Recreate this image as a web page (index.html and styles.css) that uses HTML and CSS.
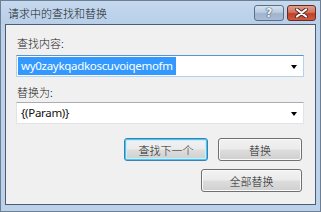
FILE: index.html
```html
<!DOCTYPE html>
<html lang="zh-CN">
<head>
<meta charset="utf-8">
<link rel="stylesheet" href="styles.css">
</head>
<body>
<div class="window">
  <div class="titlebar">
    <span class="title">请求中的查找和替换</span>
    <div class="caption-btns">
      <div class="cap help"><span class="qmark">?</span></div>
      <div class="cap close">
        <svg width="15" height="10" viewBox="0 0 15 10">
          <path d="M3 1.5 L12 8.5 M12 1.5 L3 8.5" stroke="#5a2a22" stroke-width="4" stroke-linecap="round" fill="none"/>
          <path d="M3 1.5 L12 8.5 M12 1.5 L3 8.5" stroke="#ffffff" stroke-width="2.2" stroke-linecap="round" fill="none"/>
        </svg>
      </div>
    </div>
  </div>
  <div class="client">
    <div class="label">查找内容:</div>
    <div class="combo focused">
      <span class="sel">wy0zaykqadkoscuvoiqemofm</span>
      <span class="arrow"></span>
    </div>
    <div class="label label2">替换为:</div>
    <div class="combo">
      <span class="val">{(Param)}</span>
      <span class="arrow"></span>
    </div>
    <div class="btn-row row1">
      <div class="btn default">查找下一个</div>
      <div class="btn">替换</div>
    </div>
    <div class="btn-row row2">
      <div class="btn wide">全部替换</div>
    </div>
  </div>
</div>
</body>
</html>
```
FILE: styles.css
```css
html, body {
  margin: 0;
  padding: 0;
  background: #ffffff;
}
.window {
  width: 321px;
  height: 212px;
  box-sizing: border-box;
  border: 1px solid #6e7f93;
  background: #bcd2eb;
  padding: 0 4px 6px 4px;
  display: flex;
  flex-direction: column;
  font-family: "Noto Sans", "Noto Sans CJK SC", sans-serif;
  color: #1a1a1a;
}
.titlebar {
  height: 23px;
  display: flex;
  align-items: flex-start;
  justify-content: space-between;
  background: linear-gradient(#c4d8ee, #b8cfe9);
  margin: 0 -4px;
  padding: 0 4px 0 7px;
}
.title {
  font-family: "Noto Sans CJK SC", sans-serif;
  font-weight: 300;
  font-size: 11px;
  line-height: 15px;
  margin-top: 5px;
  color: #1b1b1b;
}
.caption-btns {
  display: flex;
  gap: 3px;
  margin-top: 4px;
}
.cap {
  height: 16px;
  box-sizing: border-box;
  border: 1px solid #5b6f87;
  border-radius: 3px;
  display: flex;
  align-items: center;
  justify-content: center;
}
.help {
  width: 30px;
  background: linear-gradient(#d5e2f0 0%, #b9cbe0 45%, #9fb4cd 55%, #a9bdd5 100%);
}
.qmark {
  font-family: "DejaVu Sans", sans-serif;
  font-weight: bold;
  font-size: 12px;
  line-height: 12px;
  color: #eef3f9;
  text-shadow: 0 0 1px #3d4f66, 0 0 1px #3d4f66, 0 0 1px #3d4f66;
}
.close {
  width: 29px;
  border-color: #6b2a1f;
  background: linear-gradient(#e0a08f 0%, #d3735e 45%, #c0402a 55%, #cf5a3f 100%);
}
.close svg {
  display: block;
}
.client {
  flex: 1;
  border: 1px solid #4c5d72;
  background: #f0f0f0;
  padding: 11px 11px 0 10px;
  display: flex;
  flex-direction: column;
  align-items: flex-start;
}
.label {
  font-family: "Noto Sans CJK SC", sans-serif;
  font-weight: 300;
  font-size: 11px;
  line-height: 15px;
  height: 15px;
  margin-bottom: 4px;
  margin-left: 1px;
  color: #1a1a1a;
}
.label2 {
  margin-top: 8px;
  margin-bottom: 2px;
}
.combo {
  width: 288px;
  height: 22px;
  box-sizing: border-box;
  background: #ffffff;
  border: 1px solid #e2e3ea;
  border-top-color: #abadb3;
  display: flex;
  align-items: center;
  padding: 0 6px 0 1px;
}
.combo.focused {
  border-color: #b5d2ec;
  border-top-color: #5c93c8;
}
.sel {
  background: #3399ff;
  color: #ffffff;
  font-size: 11.5px;
  letter-spacing: -0.3px;
  line-height: 18px;
  height: 18px;
  padding: 0 3px 0 3px;
  white-space: nowrap;
}
.val {
  font-size: 11.5px;
  letter-spacing: -0.3px;
  line-height: 18px;
  padding-left: 3px;
  color: #111111;
}
.arrow {
  margin-left: auto;
  width: 0;
  height: 0;
  border-left: 3.5px solid transparent;
  border-right: 3.5px solid transparent;
  border-top: 4px solid #000000;
  margin-top: 1px;
}
.btn-row {
  align-self: stretch;
  display: flex;
  justify-content: flex-end;
  gap: 10px;
  padding-right: 2px;
}
.row1 {
  margin-top: 14px;
}
.row2 {
  margin-top: 8px;
}
.btn {
  width: 84px;
  height: 23px;
  box-sizing: border-box;
  border: 1px solid #707070;
  border-radius: 3px;
  background: linear-gradient(#f2f2f2 0%, #ebebeb 48%, #dddddd 52%, #cfcfcf 100%);
  box-shadow: inset 0 0 0 1px #fafafa;
  display: flex;
  align-items: center;
  justify-content: center;
  font-family: "Noto Sans CJK SC", sans-serif;
  font-weight: 300;
  font-size: 11px;
  color: #1a1a1a;
}
.btn.default {
  border-color: #3c7fb1;
  box-shadow: inset 0 0 0 1px #48c8f5, inset 0 0 0 2px #c8eefb;
}
.btn.wide {
  width: 101px;
}
```
